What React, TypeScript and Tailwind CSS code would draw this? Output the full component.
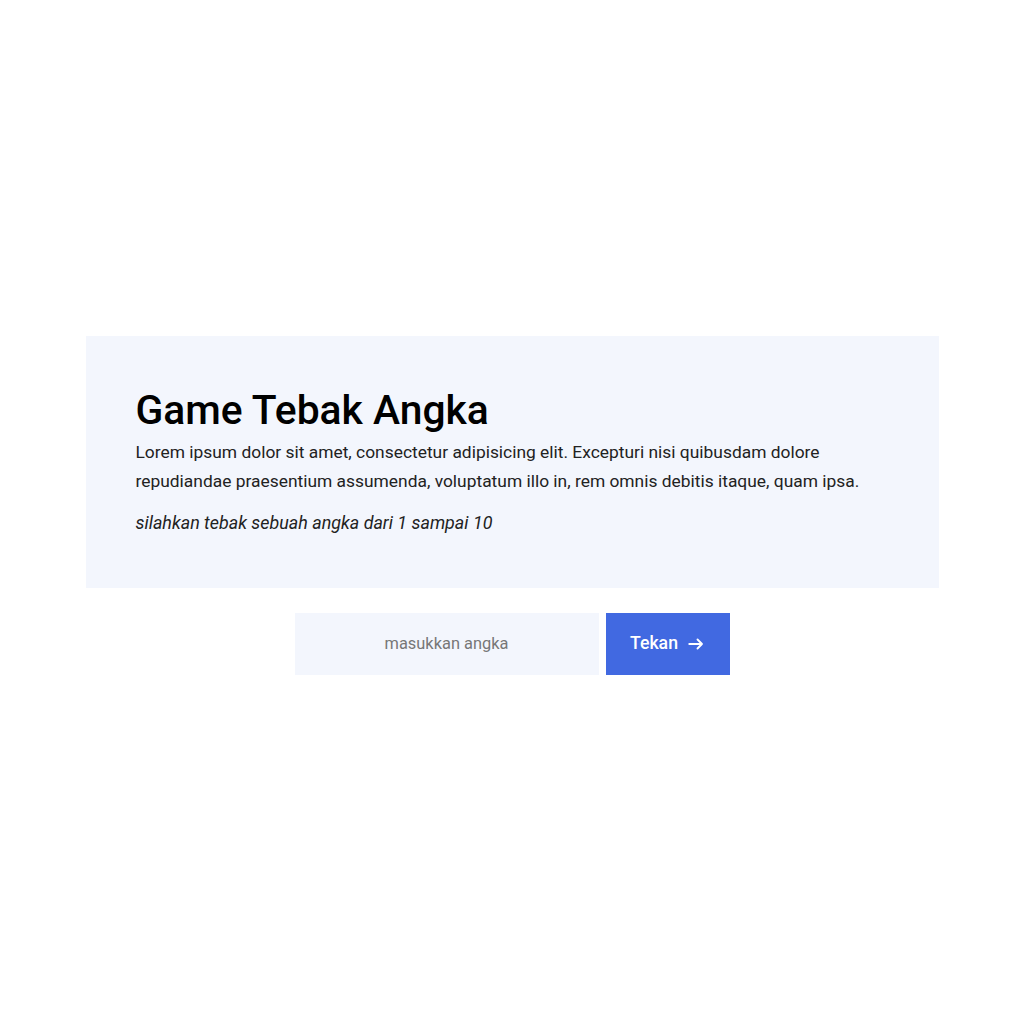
import React, { useState } from 'react';

// Number guessing game card
const App = () => {
  const [value, setValue] = useState('');

  return (
    <div className="min-h-[1024px] w-full bg-white flex flex-col items-center justify-center font-['Roboto',sans-serif]">
      <div className="w-[853px] bg-[#f3f6fd] pl-[50px] pr-[40px] pt-[50px] pb-[51px]">
        <h1 className="text-[40.8px] font-medium text-black leading-[48px]">Game Tebak Angka</h1>
        <p className="mt-[4px] text-[17.4px] leading-[29px] text-[#222]">
          Lorem ipsum dolor sit amet, consectetur adipisicing elit. Excepturi nisi quibusdam dolore
          repudiandae praesentium assumenda, voluptatum illo in, rem omnis debitis itaque, quam ipsa.
        </p>
        <p className="mt-[12px] text-[17.9px] leading-[29px] italic text-[#222]">
          silahkan tebak sebuah angka dari 1 sampai 10
        </p>
      </div>
      <div className="mt-[25px] mb-[14px] flex gap-[7px]">
        <input
          type="text"
          value={value}
          onChange={(e) => setValue(e.target.value)}
          placeholder="masukkan angka"
          className="w-[304px] h-[62px] bg-[#f3f6fd] text-center text-[16.4px] text-[#333] placeholder:text-[#777] outline-none"
        />
        <button className="w-[124px] h-[62px] bg-[#4169e1] text-white text-[17.7px] font-medium flex items-center justify-center gap-[9px]">
          Tekan
          <svg className="h-[18px] w-[18px]" fill="none" viewBox="0 0 24 24" stroke="currentColor">
            <path strokeLinecap="round" strokeLinejoin="round" strokeWidth={2.5} d="M3 12h17m-6-6l6 6-6 6" />
          </svg>
        </button>
      </div>
    </div>
  );
};

export default App;
